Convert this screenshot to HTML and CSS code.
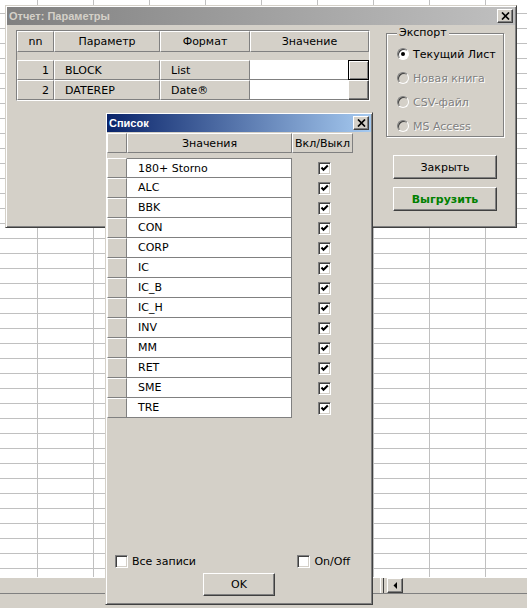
FILE: index.html
```html
<!DOCTYPE html>
<html lang="ru">
<head>
    <meta charset="UTF-8">
    <title>Отчет: Параметры</title>
    <link rel="stylesheet" href="styles.css">
</head>
<body>
    <div class="sheet"></div>
    <div class="hbar">
        <div class="hbar-tabs"></div>
        <div class="hbar-split"></div>
        <div class="hbar-arrow">
            <svg width="4" height="7" viewBox="0 0 4 7"><path d="M4 0 L4 7 L0.5 3.5 Z" fill="#000"/></svg>
        </div>
        <div class="hbar-track"></div>
    </div>

    <!-- report parameters form -->
    <div class="win params">
        <div class="title idle">
            <span>Отчет: Параметры</span>
            <span class="close">
                <svg width="9" height="8" viewBox="0 0 9 8"><path d="M1 0.5 L8 7.5 M8 0.5 L1 7.5" stroke="#000" stroke-width="1.7"/></svg>
            </span>
        </div>
        <div class="params-body">
            <div class="grid">
                <div class="grow head">
                    <div class="cell hcell c-nn">nn</div>
                    <div class="cell hcell c-par">Параметр</div>
                    <div class="cell hcell c-fmt">Формат</div>
                    <div class="cell hcell c-val">Значение</div>
                </div>
                <div class="grow">
                    <div class="cell dcell c-nn num">1</div>
                    <div class="cell dcell c-par">BLOCK</div>
                    <div class="cell dcell c-fmt">List</div>
                    <div class="cell vcell"></div>
                    <div class="cell pick focus"></div>
                </div>
                <div class="grow">
                    <div class="cell dcell c-nn num">2</div>
                    <div class="cell dcell c-par">DATEREP</div>
                    <div class="cell dcell c-fmt">Date&reg;</div>
                    <div class="cell vcell"></div>
                    <div class="cell pick"></div>
                </div>
            </div>

            <div class="side">
                <div class="group">
                    <span class="group-label">Экспорт</span>
                    <div class="radios">
                        <label class="radio"><i class="dot on"></i>Текущий Лист</label>
                        <label class="radio off"><i class="dot"></i>Новая книга</label>
                        <label class="radio off"><i class="dot"></i>CSV-файл</label>
                        <label class="radio off"><i class="dot"></i>MS Access</label>
                    </div>
                </div>
                <button class="btn side-btn">Закрыть</button>
                <button class="btn side-btn green">Выгрузить</button>
            </div>
        </div>
    </div>

    <!-- list picker -->
    <div class="win picker">
        <div class="title active">
            <span>Список</span>
            <span class="close">
                <svg width="9" height="8" viewBox="0 0 9 8"><path d="M1 0.5 L8 7.5 M8 0.5 L1 7.5" stroke="#000" stroke-width="1.7"/></svg>
            </span>
        </div>
        <div class="picker-body">
            <div class="lhead">
                <div class="cell hcell l-n"></div>
                <div class="cell hcell l-v">Значения</div>
                <div class="cell hcell l-c">Вкл/Выкл</div>
            </div>
            <div class="items" id="items"></div>
            <div class="foot">
                <label class="check"><i class="box"></i>Все записи</label>
                <label class="check"><i class="box"></i>On/Off</label>
            </div>
            <button class="btn ok">OK</button>
        </div>
    </div>

    <script>
        const values = ['180+ Storno', 'ALC', 'BBK', 'CON', 'CORP', 'IC', 'IC_B', 'IC_H', 'INV', 'MM', 'RET', 'SME', 'TRE'];
        const tick = '<svg width="9" height="9" viewBox="0 0 9 9"><path d="M1.5 3.5 L3.5 5.8 L7.8 1.5" fill="none" stroke="#000" stroke-width="2"/></svg>';
        const itemsDiv = document.getElementById('items');
        values.forEach(v => {
            const row = document.createElement('div');
            row.classList.add('lrow');
            row.innerHTML = `<div class="l-n"></div><div class="l-v">${v}</div><div class="l-c"><i class="box">${tick}</i></div>`;
            itemsDiv.appendChild(row);
        });
    </script>
</body>
</html>
```

FILE: styles.css
```css
* {
    box-sizing: border-box;
}
body {
    margin: 0;
    width: 527px;
    height: 608px;
    overflow: hidden;
    position: relative;
    background: #d4d0c8;
    font-family: "DejaVu Sans", sans-serif;
    font-size: 11px;
    color: #000;
}

/* spreadsheet behind the forms */
.sheet {
    height: 577px;
    background-color: #fff;
    background-image:
        linear-gradient(to right, #c0c0c0 1px, transparent 1px),
        linear-gradient(to bottom, #c0c0c0 1px, transparent 1px);
    background-size: 56px 100%, 100% 15px;
    background-position: 37px 0, 0 13px;
}
.hbar {
    display: flex;
    height: 17px;
    border-top: 1px solid #fff;
    border-bottom: 1px solid #808080;
}
.hbar-tabs {
    width: 380px;
}
.hbar-split {
    width: 4px;
    border-left: 1px solid #fff;
    border-right: 1px solid #404040;
}
.hbar-arrow {
    width: 16px;
    margin-left: 3px;
    display: flex;
    align-items: center;
    justify-content: center;
    border: 1px solid;
    border-color: #fff #404040 #404040 #fff;
    box-shadow: inset -1px -1px #808080;
}
.hbar-track {
    flex: 1;
}

/* windows */
.win {
    position: absolute;
    background: #d4d0c8;
    border: 1px solid;
    border-color: #d4d0c8 #404040 #404040 #d4d0c8;
    box-shadow: inset 1px 1px #fff, inset -1px -1px #808080;
    padding: 1px;
}
.params {
    left: 5px;
    top: 5px;
    width: 512px;
    height: 223px;
}
.picker {
    left: 105px;
    top: 112px;
    width: 268px;
    height: 493px;
    display: flex;
    flex-direction: column;
}
.title {
    height: 18px;
    display: flex;
    align-items: center;
    justify-content: space-between;
    padding: 0 2px 0 2px;
    font-family: "Liberation Sans", sans-serif;
    font-weight: bold;
    font-size: 11px;
}
.title.active {
    background: linear-gradient(to right, #0a246a, #a6caf0);
    color: #fff;
}
.title.idle {
    background: linear-gradient(to right, #808080, #c0c0c0);
    color: #d4d0c8;
}
.close {
    width: 16px;
    height: 14px;
    display: flex;
    align-items: center;
    justify-content: center;
    background: #d4d0c8;
    border: 1px solid;
    border-color: #fff #404040 #404040 #fff;
    box-shadow: inset -1px -1px #808080;
}

/* raised cells */
.cell {
    display: flex;
    align-items: center;
    height: 100%;
}
.hcell {
    justify-content: center;
    border: 1px solid;
    border-color: #fff #808080 #808080 #fff;
}

/* parameters grid */
.params-body {
    display: flex;
    align-items: flex-start;
    padding: 5px 0 0 9px;
}
.grid {
    width: 354px;
    border: 1px solid;
    border-color: #808080 #fff #fff #808080;
}
.grow {
    display: flex;
    height: 20px;
}
.grow.head {
    height: 21px;
    margin-bottom: 8px;
}
.c-nn { width: 37px; }
.c-par { width: 106px; }
.c-fmt { width: 90px; }
.c-val { width: 119px; }
.dcell {
    padding-left: 10px;
    border: 1px solid;
    border-color: #fff #808080 #808080 #fff;
}
.dcell.num {
    justify-content: flex-end;
    padding: 0 4px 0 0;
}
.vcell {
    width: 98px;
    background: #fff;
    border-bottom: 1px solid #808080;
}
.pick {
    width: 21px;
    border: 1px solid;
    border-color: #fff #404040 #404040 #fff;
    box-shadow: inset -1px -1px #808080;
}
.pick.focus {
    border-color: #000;
    box-shadow: inset 1px 1px #fff, inset -1px -1px #808080;
}

/* export options */
.side {
    margin-left: 16px;
    width: 118px;
}
.group {
    margin-top: 3px;
    height: 104px;
    padding-left: 10px;
    border: 1px solid #808080;
    box-shadow: inset 1px 1px #fff, 1px 1px #fff;
}
.group-label {
    display: block;
    width: fit-content;
    margin-top: -8px;
    padding: 0 2px;
    line-height: 14px;
    background: #d4d0c8;
}
.radios {
    margin-top: 2px;
}
.radio {
    display: flex;
    align-items: center;
    height: 24px;
}
.dot {
    width: 12px;
    height: 12px;
    margin-right: 4px;
    border-radius: 50%;
    background: #fff;
    border: 1px solid;
    border-color: #808080 #fff #fff #808080;
    box-shadow: inset 1px 1px #404040;
    display: flex;
    align-items: center;
    justify-content: center;
}
.dot.on::after {
    content: "";
    width: 4px;
    height: 4px;
    border-radius: 50%;
    background: #000;
}
.radio.off {
    color: #808080;
    text-shadow: 1px 1px #fff;
}
.radio.off .dot {
    background: #d4d0c8;
}

/* buttons */
.btn {
    display: block;
    font-family: "DejaVu Sans", sans-serif;
    font-size: 11px;
    color: #000;
    background: #d4d0c8;
    border: 1px solid;
    border-color: #fff #404040 #404040 #fff;
    box-shadow: inset -1px -1px #808080;
    padding: 0;
}
.side-btn {
    width: 104px;
    height: 24px;
    margin: 18px 0 0 7px;
}
.side-btn + .side-btn {
    margin-top: 8px;
}
.green {
    color: #008000;
    font-weight: bold;
}

/* list picker */
.picker-body {
    flex: 1;
    display: flex;
    flex-direction: column;
}
.lhead {
    display: flex;
    height: 20px;
    margin-top: 1px;
}
.l-n { width: 20px; }
.l-v { width: 165px; }
.l-c { width: 61px; }
.items {
    margin-top: 5px;
}
.lrow {
    display: flex;
    height: 20px;
}
.lrow .l-n {
    border: 1px solid;
    border-color: #fff #808080 #808080 #fff;
}
.lrow .l-v {
    display: flex;
    align-items: center;
    padding-left: 11px;
    background: #fff;
    border-right: 1px solid #808080;
    border-bottom: 1px solid #808080;
}
.lrow:first-child .l-v {
    border-top: 1px solid #808080;
}
.lrow .l-c {
    display: flex;
    align-items: center;
    justify-content: center;
    padding-left: 3px;
}
.box {
    width: 13px;
    height: 13px;
    background: #fff;
    border: 1px solid;
    border-color: #808080 #fff #fff #808080;
    box-shadow: inset 1px 1px #404040, inset -1px -1px #d4d0c8;
    display: flex;
    align-items: center;
    justify-content: center;
}
.foot {
    margin-top: auto;
    display: flex;
    justify-content: space-between;
    padding: 0 21px 0 8px;
}
.check {
    display: flex;
    align-items: center;
    height: 13px;
}
.check .box {
    margin-right: 4px;
}
.ok {
    width: 72px;
    height: 23px;
    margin: 5px auto 7px;
}
```
